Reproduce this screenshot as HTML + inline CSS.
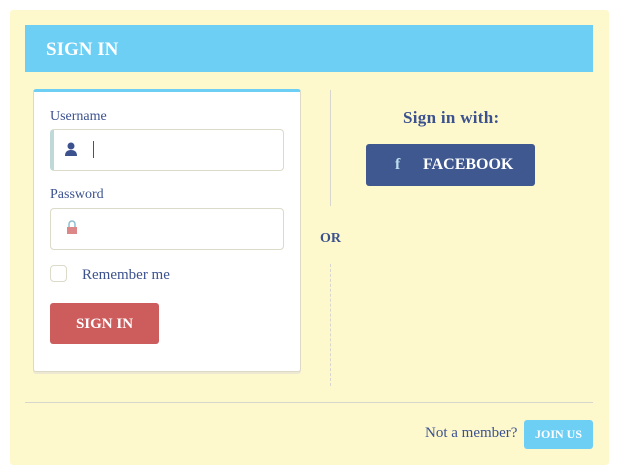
<html><head><style>
body{margin:0;width:618px;height:472px;background:#fff;font-family:"Liberation Serif",serif;position:relative;overflow:hidden}
.a{position:absolute}
#p{left:10px;top:10px;width:599px;height:455px;background:#fef9cd;border-radius:3px}
#h{left:25px;top:25px;width:568px;height:47px;background:#6ecff5;color:#fff;font-weight:bold;font-size:19px;line-height:49px;text-indent:21px}
#c{left:33px;top:89px;width:266px;height:279px;background:#fff;border:1px solid #ddd9c4;border-top:3px solid #6ecff5;border-radius:3px;box-shadow:0 2px 0 #ece8d2}
.l{color:#3c528f;font-size:14px}
.in{border:1px solid #dcdac8;border-radius:4px;background:#fff;width:232px;height:40px}
</style></head><body>
<div class="a" id="p"></div>
<div class="a" id="h">SIGN IN</div>
<div class="a" id="c"></div>
<div class="a l" style="left:50px;top:109px">Username</div>
<div class="a in" style="left:50px;top:129px;border-left:4px solid #bfd8d8;width:229px"></div>
<svg class="a" style="left:64px;top:142px" width="14" height="14"><circle cx="7" cy="4" r="3.5" fill="#3c528f"/><path d="M1 14 Q1 8 7 8 Q13 8 13 14Z" fill="#3c528f"/></svg>
<div class="a" style="left:93px;top:141px;width:1px;height:17px;background:#3c528f"></div>
<div class="a l" style="left:50px;top:187px">Password</div>
<div class="a in" style="left:50px;top:208px"></div>
<svg class="a" style="left:66px;top:220px" width="12" height="14"><path d="M3 7V4a3 3 0 0 1 6 0v3" stroke="#8bbfd0" stroke-width="1.5" fill="none"/><rect x="1" y="7" width="10" height="7" fill="#d88" /></svg>
<div class="a" style="left:50px;top:265px;width:15px;height:15px;border:1px solid #dcdac8;border-radius:4px;background:#fff"></div>
<div class="a l" style="left:82px;top:267px;font-size:15px">Remember me</div>
<div class="a" style="left:50px;top:303px;width:109px;height:41px;background:#cd5c5c;border-radius:3px;color:#fff;font-weight:bold;font-size:15px;line-height:42px;text-align:center">SIGN IN</div>
<div class="a" style="left:330px;top:90px;width:1px;height:116px;background:#d6d6cc"></div>
<div class="a" style="left:330px;top:264px;width:0;height:122px;border-left:1px dashed #d6d6cc"></div>
<div class="a l" style="left:320px;top:231px;font-weight:bold;font-size:14px">OR</div>
<div class="a l" style="left:403px;top:108px;font-weight:bold;font-size:17px;letter-spacing:0.3px">Sign in with:</div>
<div class="a" style="left:366px;top:144px;width:169px;height:42px;background:#3f5890;border-radius:3px;color:#fff;font-weight:bold;font-size:16px;line-height:42px"><span style="position:absolute;left:29px;color:#bde">f</span><span style="position:absolute;left:57px">FACEBOOK</span></div>
<div class="a" style="left:25px;top:402px;width:568px;height:1px;background:#d6d6cc"></div>
<div class="a l" style="left:425px;top:425px;font-size:15px">Not a member?</div>
<div class="a" style="left:524px;top:420px;width:69px;height:29px;background:#6ecff5;border-radius:3px;color:#fff;font-weight:bold;font-size:12px;line-height:29px;text-align:center">JOIN US</div>
</body></html>
